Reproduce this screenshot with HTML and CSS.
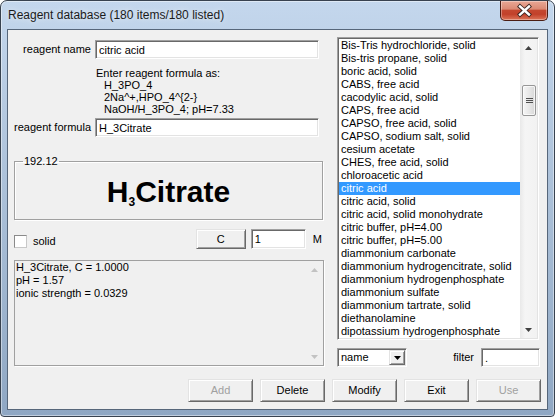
FILE: index.html
```html
<!DOCTYPE html>
<html>
<head>
<meta charset="utf-8">
<link rel="stylesheet" href="styles.css">
</head>
<body>
<div class="window">
  <div class="titlebar">
    <span class="title">Reagent database (180 items/180 listed)</span>
    <div class="close">
      <svg width="46" height="18" viewBox="0 0 46 18">
        <path d="M19 4.5 L28 12.5 M28 4.5 L19 12.5" stroke="#3a2420" stroke-width="4.2" stroke-linecap="square" fill="none"/>
        <path d="M19 4.5 L28 12.5 M28 4.5 L19 12.5" stroke="#ffffff" stroke-width="2.4" stroke-linecap="square" fill="none"/>
      </svg>
    </div>
  </div>
  <div class="client">
    <div class="main">
      <div class="left">
        <div class="row">
          <label class="lbl">reagent name</label>
          <input class="edit wide" type="text" value="citric acid">
        </div>
        <div class="hint">
          <div>Enter reagent formula as:</div>
          <div class="ind">H_3PO_4</div>
          <div class="ind">2Na^+,HPO_4^{2-}</div>
          <div class="ind">NaOH/H_3PO_4; pH=7.33</div>
        </div>
        <div class="row row-formula">
          <label class="lbl">reagent formula</label>
          <input class="edit wide" type="text" value="H_3Citrate">
        </div>
        <fieldset class="group">
          <legend>192.12</legend>
          <div class="big">H<span class="sub">3</span>Citrate</div>
        </fieldset>
        <div class="checkrow">
          <span class="chk"></span>
          <span class="chk-label">solid</span>
          <span class="spacer"></span>
          <button class="btn btn-c">C</button>
          <input class="edit conc" type="text" value="1">
          <span class="unit">M</span>
        </div>
        <div class="output">
          <div class="out-text">
            <div>H_3Citrate, C = 1.0000</div>
            <div>pH = 1.57</div>
            <div>ionic strength = 0.0329</div>
          </div>
          <div class="vscroll disabled">
            <div class="sb-btn"><svg width="7" height="4" viewBox="0 0 7 4"><polygon points="3.5,0 7,4 0,4" fill="#c2c2c2"/></svg></div>
            <div class="sb-track"></div>
            <div class="sb-btn"><svg width="7" height="4" viewBox="0 0 7 4"><polygon points="0,0 7,0 3.5,4" fill="#c2c2c2"/></svg></div>
          </div>
        </div>
      </div>
      <div class="right">
        <div class="listbox">
          <div class="items">
            <div class="item">Bis-Tris hydrochloride, solid</div>
            <div class="item">Bis-tris propane, solid</div>
            <div class="item">boric acid, solid</div>
            <div class="item">CABS, free acid</div>
            <div class="item">cacodylic acid, solid</div>
            <div class="item">CAPS, free acid</div>
            <div class="item">CAPSO, free acid, solid</div>
            <div class="item">CAPSO, sodium salt, solid</div>
            <div class="item">cesium acetate</div>
            <div class="item">CHES, free acid, solid</div>
            <div class="item">chloroacetic acid</div>
            <div class="item selected">citric acid</div>
            <div class="item">citric acid, solid</div>
            <div class="item">citric acid, solid monohydrate</div>
            <div class="item">citric buffer, pH=4.00</div>
            <div class="item">citric buffer, pH=5.00</div>
            <div class="item">diammonium carbonate</div>
            <div class="item">diammonium hydrogencitrate, solid</div>
            <div class="item">diammonium hydrogenphosphate</div>
            <div class="item">diammonium sulfate</div>
            <div class="item">diammonium tartrate, solid</div>
            <div class="item">diethanolamine</div>
            <div class="item">dipotassium hydrogenphosphate</div>
          </div>
          <div class="vscroll">
            <div class="sb-btn"><svg width="7" height="4" viewBox="0 0 7 4"><polygon points="3.5,0 7,4 0,4" fill="#404040"/></svg></div>
            <div class="sb-track">
              <div class="thumb">
                <svg width="7" height="7" viewBox="0 0 7 7">
                  <path d="M0 1.5 H7 M0 3.5 H7 M0 5.5 H7" stroke="#505050" stroke-width="1"/>
                </svg>
              </div>
            </div>
            <div class="sb-btn"><svg width="7" height="4" viewBox="0 0 7 4"><polygon points="0,0 7,0 3.5,4" fill="#404040"/></svg></div>
          </div>
        </div>
        <div class="combo-row">
          <div class="combo">
            <span class="combo-text">name</span>
            <span class="combo-btn"><svg width="7" height="4" viewBox="0 0 7 4"><polygon points="0,0 7,0 3.5,4" fill="#000"/></svg></span>
          </div>
          <span class="filter-label">filter</span>
          <input class="edit filter" type="text" value=".">
        </div>
      </div>
    </div>
    <div class="buttons">
      <button class="btn disabled">Add</button>
      <button class="btn">Delete</button>
      <button class="btn">Modify</button>
      <button class="btn">Exit</button>
      <button class="btn disabled">Use</button>
    </div>
  </div>
</div>
</body>
</html>
```
FILE: styles.css
```css
* { box-sizing: border-box; }
html, body { margin: 0; padding: 0; background: #ffffff; }
body {
  font-family: "Liberation Sans", Arial, sans-serif;
  font-size: 11px;
  line-height: 13px;
  color: #000;
}

.window {
  width: 555px;
  height: 417px;
  border: 1px solid #38424f;
  border-radius: 7px 7px 4px 4px;
  background: linear-gradient(180deg, #c4d7ed 0%, #b6cae1 25%, #a4bad3 60%, #8fa7c3 100%);
  box-shadow: inset 0 0 0 1px rgba(255,255,255,0.45);
  padding: 0 6px 6px 6px;
  display: flex;
  flex-direction: column;
}

.titlebar {
  height: 28px;
  display: flex;
  align-items: flex-start;
}
.title {
  font-size: 12px;
  line-height: 14px;
  padding: 7px 0 0 1px;
  color: #1b1b1b;
  text-shadow: 0 0 6px rgba(255,255,255,0.8);
}
.close {
  margin-left: auto;
  width: 48px;
  height: 20px;
  border: 1px solid #4a1d14;
  border-top: none;
  border-radius: 0 0 5px 5px;
  background: linear-gradient(180deg, #e9a795 0%, #dc8a74 42%, #c4472f 50%, #c2412a 70%, #dc7458 100%);
  box-shadow: inset 0 0 0 1px rgba(255,255,255,0.35);
  display: flex;
  align-items: center;
  justify-content: center;
}
.close svg { display: block; }

.client {
  flex: 1;
  border: 1px solid #56667a;
  background: #f0f0f0;
  display: flex;
  flex-direction: column;
}

.main {
  display: grid;
  grid-template-columns: 322px 1fr;
  column-gap: 7px;
}

/* left column */
.left {
  padding: 10px 0 0 6px;
  display: flex;
  flex-direction: column;
}
.row {
  display: flex;
  align-items: center;
  height: 19px;
}
.lbl {
  width: 77px;
  margin-right: 4px;
  text-align: right;
  white-space: nowrap;
}
.edit {
  font: inherit;
  margin: 0;
  padding: 0 0 0 3px;
  height: 19px;
  background: #fff;
  color: #000;
  border: 1px solid;
  border-color: #a0a0a0 #ffffff #ffffff #a0a0a0;
  box-shadow: inset 1px 1px 0 #696969, inset -1px -1px 0 #e3e3e3;
  outline: none;
}
.wide { width: 224px; }
.hint {
  margin: 8px 0 0 82px;
  line-height: 12px;
}
.ind { padding-left: 8px; }
.row-formula { margin-top: 3px; }

.group {
  margin: 19px 0 0 0;
  padding: 0 0 12px 0;
  width: 309px;
  border: 1px solid #a0a0a0;
  box-shadow: 1px 1px 0 #ffffff, inset 1px 1px 0 #ffffff;
  min-width: 0;
}
.group legend {
  margin-left: 8px;
  padding: 0 1px;
  line-height: 11px;
}
.big {
  margin-top: 10px;
  font-weight: bold;
  font-size: 30px;
  line-height: 30px;
  text-align: center;
}
.sub {
  font-size: 12px;
  line-height: 0;
  vertical-align: -4px;
}

.checkrow {
  margin-top: 9px;
  height: 20px;
  width: 309px;
  padding-right: 1px;
  display: flex;
  align-items: center;
}
.chk {
  width: 13px;
  height: 13px;
  margin-top: 5px;
  background: #fff;
  border: 1px solid;
  border-color: #8a8a8a #c8c8c8 #c8c8c8 #8a8a8a;
}
.chk-label { margin: 5px 0 0 6px; }
.spacer { flex: 1; }
.btn {
  font: inherit;
  margin: 0;
  padding: 0;
  color: #000;
  background: #f0f0f0;
  border: 1px solid;
  border-color: #e3e3e3 #696969 #696969 #e3e3e3;
  box-shadow: inset 1px 1px 0 #ffffff, inset -1px -1px 0 #a0a0a0;
  display: flex;
  align-items: center;
  justify-content: center;
}
.btn.disabled { color: #a0a0a0; }
.btn-c { width: 50px; height: 20px; }
.conc { width: 55px; height: 20px; margin-left: 5px; }
.unit { margin-left: 7px; }

.output {
  margin-top: 11px;
  width: 310px;
  height: 106px;
  border: 1px solid #a0a0a0;
  box-shadow: 1px 1px 0 #ffffff;
  display: flex;
}
.out-text {
  flex: 1;
  padding: 0 0 0 1px;
}

/* scrollbars */
.vscroll {
  width: 17px;
  display: flex;
  flex-direction: column;
  background: linear-gradient(90deg, #e9e9e9, #f5f5f5 30%, #f2f2f2);
}
.vscroll.disabled { background: #f0f0f0; }
.sb-btn {
  height: 17px;
  display: flex;
  align-items: center;
  justify-content: center;
}
.sb-btn svg { display: block; }
.sb-track { flex: 1; }
.thumb {
  margin: 29px 1px 0 2px;
  height: 31px;
  border: 1px solid #979797;
  border-radius: 2px;
  background: linear-gradient(90deg, #f6f6f6, #e8e8e8 50%, #d8d8d8);
  box-shadow: inset 0 0 0 1px rgba(255,255,255,0.7);
  display: flex;
  align-items: center;
  justify-content: center;
}
.thumb svg { display: block; }

/* right column */
.right {
  padding-top: 7px;
  display: flex;
  flex-direction: column;
}
.listbox {
  width: 202px;
  height: 303px;
  background: #fff;
  border: 1px solid;
  border-color: #a0a0a0 #ffffff #ffffff #a0a0a0;
  box-shadow: inset 1px 1px 0 #696969, inset -1px -1px 0 #e3e3e3;
  padding: 1px;
  display: flex;
}
.items {
  flex: 1;
  overflow: hidden;
}
.item {
  height: 13px;
  line-height: 13px;
  padding-left: 2px;
  white-space: nowrap;
}
.item.selected {
  background: #3399ff;
  color: #fff;
}

.combo-row {
  margin-top: 8px;
  width: 203px;
  height: 19px;
  display: flex;
  align-items: center;
}
.combo {
  width: 70px;
  height: 19px;
  background: #fff;
  border: 1px solid;
  border-color: #a0a0a0 #ffffff #ffffff #a0a0a0;
  box-shadow: inset 1px 1px 0 #696969, inset -1px -1px 0 #e3e3e3;
  padding: 1px;
  display: flex;
  align-items: stretch;
}
.combo-text {
  flex: 1;
  padding-left: 2px;
  line-height: 15px;
}
.combo-btn {
  width: 16px;
  background: #f0f0f0;
  border: 1px solid;
  border-color: #e3e3e3 #696969 #696969 #e3e3e3;
  box-shadow: inset 1px 1px 0 #ffffff, inset -1px -1px 0 #a0a0a0;
  display: flex;
  align-items: center;
  justify-content: center;
}
.combo-btn svg { display: block; }
.filter-label { margin-left: auto; }
.filter { width: 59px; margin-left: 7px; padding-left: 3px; }

.buttons {
  margin-top: 12px;
  padding-left: 180px;
  display: flex;
  gap: 7px;
}
.buttons .btn { width: 65px; height: 23px; }
```
